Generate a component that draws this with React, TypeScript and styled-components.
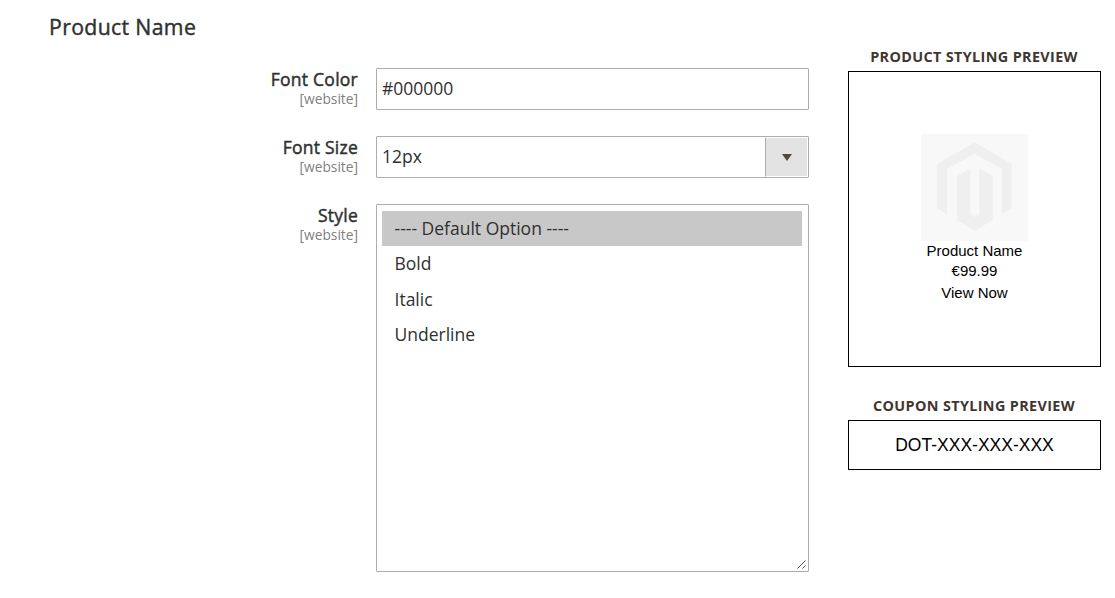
import React from "react";
import styled, { createGlobalStyle } from "styled-components";

const GlobalStyle = createGlobalStyle`
  * { box-sizing: border-box; }
  body {
    margin: 0;
    background: #fff;
    color: #303030;
    font-family: "Open Sans", "Noto Sans", sans-serif;
  }
`;

const Page = styled.main`
  display: flex;
  align-items: flex-start;
  width: 1115px;
  height: 598px;
  overflow: hidden;
  white-space: nowrap;
`;

const Settings = styled.section`
  width: 809px;
  padding: 12px 0 0 49px;
`;

const Heading = styled.h2`
  margin: 0 0 26px;
  font-size: 21.25px;
  line-height: 30px;
  font-weight: 400;
  letter-spacing: 0.35px;
  -webkit-text-stroke: 0.4px #303030;
`;

const Field = styled.div`
  display: grid;
  grid-template-columns: 309px 433px;
  column-gap: 18px;
  margin-bottom: 26px;
`;

const Label = styled.label`
  text-align: right;
  font-size: 17.5px;
  line-height: 22px;
  font-weight: 400;
  letter-spacing: 0.25px;
  -webkit-text-stroke: 0.45px #303030;
`;

const Scope = styled.span`
  display: block;
  margin-top: 1px;
  color: #808080;
  font-size: 13.75px;
  line-height: 16px;
  letter-spacing: 0;
  -webkit-text-stroke: 0;
`;

const Control = styled.div`
  display: flex;
  justify-content: space-between;
  height: 42px;
  padding-left: 5px;
  border: 1px solid #adadad;
  border-radius: 1px;
  font-size: 17.5px;
  line-height: 38px;
`;

const ArrowButton = styled.span`
  display: flex;
  align-items: center;
  justify-content: center;
  width: 43px;
  border: 1px solid #fff;
  border-left-color: #adadad;
  background: #e3e3e3;
`;

const OptionList = styled.div`
  position: relative;
  height: 368px;
  padding: 6px 6px 0 5px;
  border: 1px solid #adadad;
  border-radius: 1px;
`;

const Option = styled.div<{ $selected?: boolean }>`
  height: 35.25px;
  padding-left: 12.5px;
  background: ${(p) => (p.$selected ? "#c8c8c8" : "transparent")};
  font-size: 17.5px;
  line-height: 35px;
`;

const ResizeHandle = styled.svg`
  position: absolute;
  right: 2px;
  bottom: 2px;
`;

const Previews = styled.aside`
  width: 253px;
  margin-left: 39px;
  padding-top: 46px;
`;

const PreviewTitle = styled.h3`
  margin: 0 0 4px;
  padding-right: 1px;
  color: #41362f;
  text-align: center;
  text-transform: uppercase;
  font-size: 14.4px;
  line-height: 21px;
  font-weight: 700;
  letter-spacing: 0.36px;
`;

const ProductBox = styled.div`
  display: flex;
  flex-direction: column;
  align-items: center;
  height: 296px;
  margin-bottom: 28px;
  padding-top: 62px;
  border: 1px solid #000;
  color: #000;
  font: 15px/20px "Liberation Sans", Arial, sans-serif;
`;

const ViewLink = styled.span`
  margin-top: 2px;
`;

const CouponBox = styled.div`
  height: 50px;
  border: 1px solid #000;
  color: #000;
  text-align: center;
  font: 17.5px/48px "Liberation Sans", Arial, sans-serif;
`;

const options = ["---- Default Option ----", "Bold", "Italic", "Underline"];

function FieldLabel({ text }: { text: string }) {
  return (
    <Label>
      {text}
      <Scope>[website]</Scope>
    </Label>
  );
}

function ProductPlaceholder() {
  return (
    <svg width="107" height="107" viewBox="0 0 107 107">
      <rect width="107" height="107" fill="#f8f8f8" />
      <path
        fill="#efefef"
        d="M53.7 8.3 90.7 30v44.3L81 80V35L53.7 19.7 26 35v45l-9.7-5.7V30Z"
      />
      <path
        fill="#efefef"
        d="M36 42l13.3-7.7v46l4.4 2.7 4.6-2.7v-46L71.7 42v44l-18 10.7L36 86Z"
      />
    </svg>
  );
}

export default function App() {
  return (
    <>
      <GlobalStyle />
      <Page>
        <Settings>
          <Heading>Product Name</Heading>
          <Field>
            <FieldLabel text="Font Color" />
            <Control>#000000</Control>
          </Field>
          <Field>
            <FieldLabel text="Font Size" />
            <Control>
              12px
              <ArrowButton>
                <svg width="10" height="7" viewBox="0 0 10 7">
                  <path d="M0 0h10L5 7Z" fill="#514943" />
                </svg>
              </ArrowButton>
            </Control>
          </Field>
          <Field>
            <FieldLabel text="Style" />
            <OptionList>
              {options.map((name, i) => (
                <Option key={name} $selected={i === 0}>
                  {name}
                </Option>
              ))}
              <ResizeHandle width="9" height="9" viewBox="0 0 9 9">
                <path
                  d="M.5 8.5l8-8M5.5 8.5l3-3"
                  stroke="#555"
                  fill="none"
                />
              </ResizeHandle>
            </OptionList>
          </Field>
        </Settings>
        <Previews>
          <PreviewTitle>Product Styling Preview</PreviewTitle>
          <ProductBox>
            <ProductPlaceholder />
            <span>Product Name</span>
            <span>€99.99</span>
            <ViewLink>View Now</ViewLink>
          </ProductBox>
          <PreviewTitle>Coupon Styling Preview</PreviewTitle>
          <CouponBox>DOT-XXX-XXX-XXX</CouponBox>
        </Previews>
      </Page>
    </>
  );
}
